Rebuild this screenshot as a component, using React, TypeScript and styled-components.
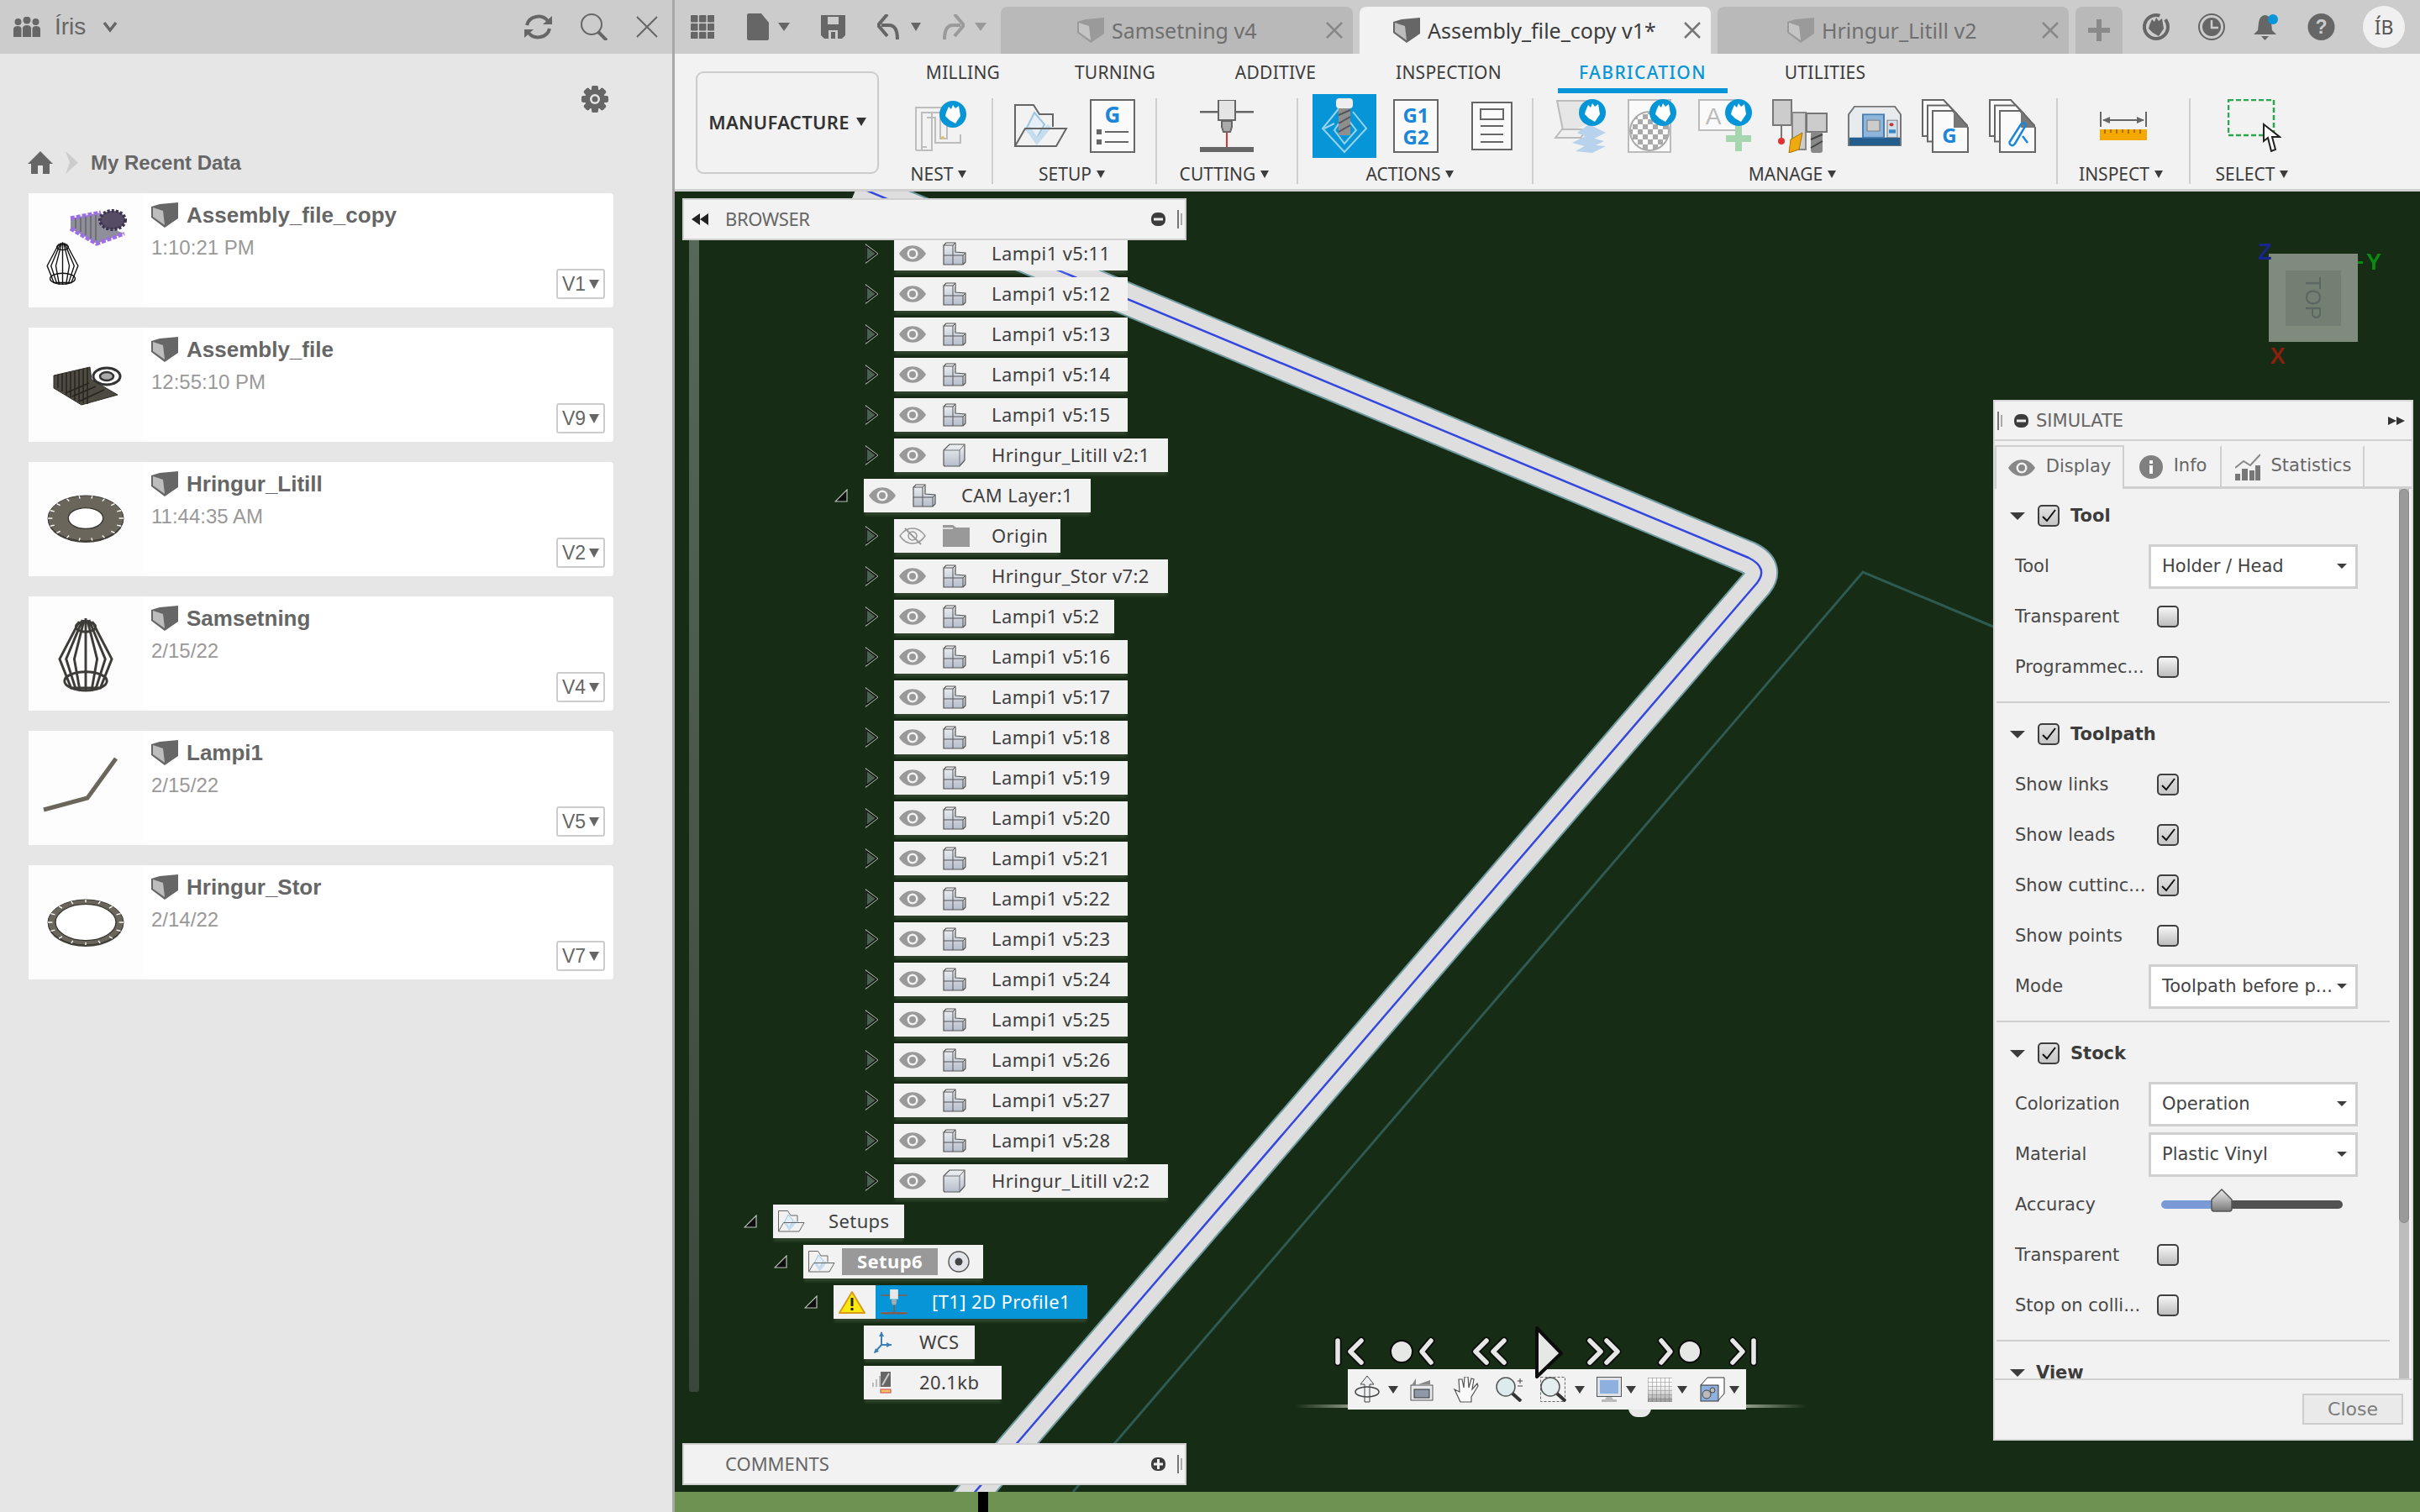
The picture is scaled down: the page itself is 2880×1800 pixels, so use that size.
import React from 'react';
import styled, { createGlobalStyle } from 'styled-components';

const UI_FONT = '"Noto Sans", "Open Sans", sans-serif';
const ARIAL = '"Liberation Sans", Arial, sans-serif';
const DIALOG_FONT = '"DejaVu Sans", sans-serif';
const BLUE = '#0696d7';

const GlobalStyle = createGlobalStyle`
  html, body { margin: 0; padding: 0; background: #e6e6e6; }
  * { box-sizing: border-box; }
  svg { display: block; flex: none; }
`;

const Screen = styled.div`
  display: flex;
  width: 2880px;
  height: 1800px;
  overflow: hidden;
  font-family: ${UI_FONT};
`;

/* ---------- data panel ---------- */

const DataPanel = styled.aside`
  width: 803px;
  flex: none;
  display: flex;
  flex-direction: column;
  background: #e6e6e6;
  border-right: 3px solid #a8a8a8;
  font-family: ${ARIAL};
`;

const DataHeader = styled.header`
  height: 64px;
  flex: none;
  display: flex;
  align-items: center;
  padding: 0 17px 0 16px;
  background: #cccccc;
  color: #666;
`;

const HubName = styled.span`
  margin-left: 17px;
  font-size: 28px;
  line-height: 32px;
  width: 57px;
`;

const HeaderActions = styled.div`
  margin-left: auto;
  display: flex;
  align-items: center;
  gap: 34px;
`;

const SettingsRow = styled.div`
  height: 116px;
  flex: none;
  display: flex;
  align-items: center;
  padding: 0 0 8px 692px;
`;

const Breadcrumb = styled.div`
  height: 50px;
  flex: none;
  display: flex;
  align-items: flex-start;
  gap: 13px;
  padding-left: 33px;
  color: #666;
  font-size: 24px;
  font-weight: 700;
  line-height: 28px;
`;

const CardList = styled.div`
  display: flex;
  flex-direction: column;
  gap: 24px;
  margin-left: 34px;
  width: 696px;
`;

const Card = styled.article`
  position: relative;
  height: 136px;
  display: flex;
  background: #fff;
  border-radius: 4px;
`;

const Thumb = styled.div`
  width: 136px;
  flex: none;
  background: #fdfdfd;
`;

const CardBody = styled.div`
  flex: 1;
  padding: 10px 0 0 10px;
`;

const CardTitle = styled.div`
  display: flex;
  align-items: center;
  gap: 10px;
  height: 32px;
  color: #666;
  font-size: 26px;
  font-weight: 700;
`;

const CardTime = styled.div`
  margin-top: 8px;
  color: #999;
  font-size: 24px;
  line-height: 30px;
`;

const VersionBox = styled.div`
  position: absolute;
  right: 10px;
  bottom: 10px;
  width: 58px;
  height: 36px;
  display: flex;
  align-items: center;
  justify-content: center;
  gap: 4px;
  background: #fff;
  border: 2px solid #ccc;
  border-radius: 3px;
  color: #666;
  font-size: 23px;
`;

const Triangle = styled.i<{ $w?: number; $h?: number; $c?: string }>`
  display: block;
  flex: none;
  width: 0;
  height: 0;
  border-left: ${p => p.$w ?? 6}px solid transparent;
  border-right: ${p => p.$w ?? 6}px solid transparent;
  border-top: ${p => p.$h ?? 10}px solid ${p => p.$c ?? '#666'};
`;

/* ---------- window chrome ---------- */

const Main = styled.main`
  flex: 1;
  min-width: 0;
  display: flex;
  flex-direction: column;
`;

const TabBar = styled.div`
  height: 64px;
  flex: none;
  display: flex;
  align-items: flex-end;
  background: #cccccc;
`;

const QuickTools = styled.div`
  width: 388px;
  height: 64px;
  flex: none;
  display: flex;
  align-items: center;
  padding-left: 19px;
`;

const QuickSlot = styled.span<{ $ml: number }>`
  margin-left: ${p => p.$ml}px;
  display: flex;
  align-items: center;
`;

const DocTab = styled.div<{ $w: number; $pl: number; $active?: boolean }>`
  width: ${p => p.$w}px;
  height: 56px;
  flex: none;
  margin-right: 8px;
  display: flex;
  align-items: center;
  gap: 9px;
  padding: 0 12px 0 ${p => p.$pl}px;
  border-radius: 8px 8px 0 0;
  background: ${p => (p.$active ? '#f2f2f2' : '#b9b9b9')};
  color: ${p => (p.$active ? '#3c3c3c' : '#6f6f6f')};
  font-size: 25px;
`;

const TabClose = styled.span`
  margin-left: auto;
  display: flex;
`;

const PlusTab = styled.div`
  width: 56px;
  height: 56px;
  flex: none;
  display: flex;
  align-items: center;
  justify-content: center;
  border-radius: 8px 8px 0 0;
  background: #b9b9b9;
`;

const StatusIcons = styled.div`
  height: 64px;
  flex: 1;
  display: flex;
  align-items: center;
  gap: 34px;
  padding-left: 24px;
`;

const Avatar = styled.div`
  width: 50px;
  height: 50px;
  flex: none;
  margin-left: -1px;
  display: flex;
  align-items: center;
  justify-content: center;
  border-radius: 50%;
  background: #f0f0f0;
  color: #555;
  font-size: 23px;
`;

/* ---------- ribbon ---------- */

const Ribbon = styled.div`
  height: 164px;
  flex: none;
  display: flex;
  background: #f2f2f2;
  border-bottom: 3px solid #d0d0d0;
`;

const WorkspaceButton = styled.div`
  width: 218px;
  height: 122px;
  flex: none;
  margin: 21px 0 0 25px;
  display: flex;
  align-items: center;
  justify-content: center;
  gap: 8px;
  padding-bottom: 3px;
  border: 2px solid #ccc;
  border-radius: 9px;
  color: #333;
  font-size: 22px;
  font-weight: 600;
  letter-spacing: 0.3px;
`;

const RibbonBody = styled.div`
  display: flex;
  flex-direction: column;
  margin-left: 14px;
`;

const RibbonTabs = styled.nav`
  height: 47px;
  display: flex;
  gap: 44px;
  padding-left: 20px;
`;

const RibbonTab = styled.div<{ $w: number; $active?: boolean }>`
  width: ${p => p.$w}px;
  height: 47px;
  flex: none;
  text-align: center;
  line-height: 44px;
  font-size: 21px;
  letter-spacing: ${p => (p.$active ? 1.4 : 0.25)}px;
  color: ${p => (p.$active ? BLUE : '#3c3c3c')};
  font-weight: ${p => (p.$active ? 500 : 400)};
  border-bottom: 6px solid ${p => (p.$active ? BLUE : 'transparent')};
`;

const RibbonGroups = styled.div`
  display: flex;
  padding-top: 6px;
  height: 114px;
`;

const ToolGroup = styled.section<{ $w: number; $last?: boolean; $shift?: number }>`
  width: ${p => p.$w}px;
  flex: none;
  display: flex;
  flex-direction: column;
  align-items: center;
  height: 102px;
  padding-right: ${p => p.$shift ?? 0}px;
  border-right: 2px solid ${p => (p.$last ? 'transparent' : '#cfcfcf')};
`;

const ToolIcons = styled.div<{ $gap: number }>`
  height: 76px;
  flex: none;
  margin-top: -5px;
  display: flex;
  align-items: center;
  gap: ${p => p.$gap}px;
`;

const GroupLabel = styled.div`
  flex: none;
  display: flex;
  align-items: center;
  gap: 6px;
  margin-top: 4px;
  padding-right: 6px;
  height: 30px;
  font-size: 21px;
  color: #3c3c3c;
`;

const ActiveTool = styled.div`
  width: 76px;
  height: 76px;
  display: flex;
  align-items: center;
  justify-content: center;
  background: ${BLUE};
`;

/* ---------- viewport ---------- */

const Viewport = styled.div`
  position: relative;
  flex: 1;
  background: #162c14;
  overflow: hidden;
`;

const Ground = styled.div`
  height: 24px;
  flex: none;
  padding-left: 361px;
  background: #6d9252;
`;

const GroundMark = styled.div`
  width: 12px;
  height: 24px;
  background: #000;
`;

const SceneSvg = styled.svg`
  position: absolute;
  inset: 0;
`;

const ViewCube = styled.div`
  position: absolute;
  left: 1897px;
  top: 74px;
  width: 106px;
  height: 105px;
  display: flex;
  align-items: center;
  justify-content: center;
  background: #7f8c7d;
`;

const CubeFace = styled.div`
  width: 66px;
  height: 66px;
  display: flex;
  align-items: center;
  justify-content: center;
  background: #727f72;
  color: #5b6862;
  font: 25px ${ARIAL};
  transform: rotate(90deg);
  filter: blur(0.5px);
`;

const AxisLabel = styled.span<{ $x: number; $y: number; $c: string }>`
  position: absolute;
  left: ${p => p.$x}px;
  top: ${p => p.$y}px;
  color: ${p => p.$c};
  font: 700 27px/28px ${ARIAL};
  filter: blur(0.7px);
`;

const AxisTick = styled.div`
  position: absolute;
  left: 2003px;
  top: 83px;
  width: 6px;
  height: 3px;
  background: #0a8a10;
`;

const FloatBar = styled.div<{ $top: number }>`
  position: absolute;
  left: 9px;
  top: ${p => p.$top}px;
  width: 600px;
  height: 50px;
  display: flex;
  align-items: center;
  padding-right: 3px;
  background: #f2f2f2;
  border: 2px solid #d0d0d0;
  color: #666;
  font-size: 22px;
`;

const FloatTitle = styled.span<{ $ml: number; $tight?: boolean }>`
  margin-left: ${p => p.$ml}px;
  margin-bottom: 3px;
  letter-spacing: ${p => (p.$tight ? -0.4 : 0)}px;
`;

const RewindSlot = styled.span`
  margin-left: 9px;
`;

const FloatEnd = styled.div`
  margin-left: auto;
  display: flex;
  align-items: center;
  gap: 14px;
`;

const TreeScroll = styled.div`
  position: absolute;
  left: 17px;
  top: 54px;
  width: 12px;
  height: 1375px;
  border-radius: 0 0 3px 3px;
  background: linear-gradient(#566858, #3a4639);
`;

const Tree = styled.div`
  position: absolute;
  left: 9px;
  top: 54px;
  display: flex;
  flex-direction: column;
  gap: 8px;
`;

const TreeRow = styled.div<{ $depth: number }>`
  display: flex;
  align-items: center;
  height: 40px;
  padding-left: ${p => 72 + p.$depth * 36}px;
`;

const ArrowSlot = styled.span`
  width: 36px;
  flex: none;
  display: flex;
  padding-left: 1px;
`;

const RowBody = styled.div<{ $w: number }>`
  width: ${p => p.$w}px;
  height: 40px;
  display: flex;
  align-items: center;
  padding-left: 6px;
  background: #f2f2f2;
  color: #3f3f3f;
  font-size: 22px;
  letter-spacing: 0.4px;
  white-space: nowrap;
  box-shadow: 0 5px 3px -1px rgba(255, 255, 255, 0.11);
`;

const RowLabel = styled.span`
  margin-bottom: 3px;
`;

const EyeSlot = styled.span`
  width: 52px;
  flex: none;
`;

const TypeSlot = styled.span`
  width: 58px;
  flex: none;
`;

const SmallSlot = styled.span<{ $pl?: number }>`
  width: 60px;
  flex: none;
  display: flex;
  padding-left: ${p => p.$pl ?? 0}px;
`;

const SetupName = styled.span`
  width: 114px;
  height: 32px;
  margin-left: 8px;
  display: flex;
  align-items: center;
  justify-content: center;
  padding-bottom: 2px;
  background: #999;
  color: #fff;
  font-weight: 700;
`;

const RadioSlot = styled.span`
  margin-left: 12px;
`;

const OperationRow = styled(RowBody)`
  padding-left: 0;
`;

const WarnCell = styled.span`
  width: 50px;
  flex: none;
  padding-left: 6px;
`;

const OperationName = styled.span`
  height: 40px;
  flex: 1;
  display: flex;
  align-items: center;
  gap: 29px;
  padding-left: 6px;
  background: ${BLUE};
  color: #fff;
`;

const PlaybackBar = styled.svg`
  position: absolute;
  left: 785px;
  top: 1345px;
  z-index: 2;
`;

const SliderGlow = styled.div`
  position: absolute;
  left: 737px;
  top: 1444px;
  width: 610px;
  height: 4px;
  background: linear-gradient(90deg, transparent, #a9b29f 14%, #a9b29f 86%, transparent);
`;

const SliderBump = styled.div`
  position: absolute;
  left: 1135px;
  top: 1448px;
  width: 27px;
  height: 11px;
  border-radius: 0 0 14px 14px;
  background: #e8e8e8;
`;

const NavBar = styled.div`
  position: absolute;
  left: 801px;
  top: 1402px;
  width: 474px;
  height: 48px;
  display: flex;
  align-items: center;
  padding-left: 8px;
  background: #f2f2f2;
`;

const NavItem = styled.span<{ $ml: number }>`
  margin-left: ${p => p.$ml}px;
  display: flex;
`;

/* ---------- simulate dialog ---------- */

const SimPanel = styled.div`
  position: absolute;
  left: 1569px;
  top: 248px;
  width: 500px;
  height: 1239px;
  display: flex;
  flex-direction: column;
  background: #f2f2f2;
  border: 2px solid #d8d8d8;
  font-family: ${DIALOG_FONT};
  font-size: 21px;
  color: #484848;
`;

const SimHeader = styled.div`
  height: 47px;
  flex: none;
  display: flex;
  align-items: center;
  gap: 6px;
  padding: 0 8px 0 3px;
  color: #666;
  border-bottom: 2px solid #d0d0d0;
`;

const SimBadge = styled.span`
  margin-left: 8px;
`;

const SimTitle = styled.span`
  margin-left: 3px;
  flex: 1;
`;

const SimTabs = styled.div`
  height: 57px;
  flex: none;
  display: flex;
  padding: 5px 0 0 0;
  border-bottom: 3px solid #cfcfcf;
`;

const SimTab = styled.div<{ $w: number; $active?: boolean }>`
  width: ${p => p.$w}px;
  flex: none;
  display: flex;
  align-items: center;
  justify-content: center;
  gap: 13px;
  color: #666;
  border-right: 2px solid #cfcfcf;
  border-top: 2px solid ${p => (p.$active ? '#cfcfcf' : 'transparent')};
  border-left: 2px solid ${p => (p.$active ? '#cfcfcf' : 'transparent')};
  ${p => p.$active && 'margin-bottom: -3px; background: #f2f2f2;'}
`;

const SimTabText = styled.span`
  margin-bottom: 4px;
`;

const SimContent = styled.div`
  position: relative;
  flex: 1;
  min-height: 0;
  overflow: hidden;
  padding: 2px 0 0 2px;
`;

const ScrollTrack = styled.div`
  position: absolute;
  right: 3px;
  top: 0;
  bottom: 0;
  width: 12px;
  background: #bdbdbd;
`;

const ScrollThumb = styled.div`
  height: 874px;
  border-radius: 6px;
  background: #9a9a9a;
  border: 1px solid #8a8a8a;
`;

const Section = styled.section<{ $open?: boolean }>`
  width: 468px;
  padding-bottom: 11px;
  margin-bottom: 7px;
  border-bottom: 2px solid ${p => (p.$open ? '#cfcfcf' : 'transparent')};
`;

const SectionHead = styled.div`
  height: 60px;
  display: flex;
  align-items: center;
  padding-left: 16px;
  color: #3c3c3c;
  font-weight: 700;
`;

const HeadTitle = styled.span`
  margin-left: 13px;
`;

const Check = styled.span<{ $on?: boolean; $ml: number }>`
  width: 26px;
  height: 26px;
  flex: none;
  margin-left: ${p => p.$ml}px;
  display: flex;
  align-items: center;
  justify-content: center;
  border: 2px solid #3f3f3f;
  border-radius: 5px;
  background: ${p => (p.$on ? 'linear-gradient(#e2e2e2, #c6c6c6)' : 'linear-gradient(#f6f6f6, #bdbdbd)')};
`;

const FieldRow = styled.div`
  height: 60px;
  display: flex;
  align-items: center;
  padding-left: 22px;
`;

const FieldLabel = styled.span`
  width: 159px;
  flex: none;
  white-space: nowrap;
`;

const SelectBox = styled.div`
  width: 249px;
  height: 53px;
  flex: none;
  display: flex;
  align-items: center;
  justify-content: space-between;
  padding: 0 10px 0 13px;
  background: #fff;
  border: 3px solid #cfcfcf;
  color: #444;
  white-space: nowrap;
`;

const Slider = styled.div`
  position: relative;
  width: 216px;
  height: 10px;
  margin-left: 15px;
  border-radius: 5px;
  background: linear-gradient(90deg, #7a9ad6 28%, #525252 28%);
`;

const SliderThumb = styled.svg`
  position: absolute;
  left: 59px;
  top: -14px;
`;

const SimFooter = styled.div`
  height: 72px;
  flex: none;
  display: flex;
  align-items: center;
  justify-content: flex-end;
  padding: 0 10px 2px 0;
  border-top: 2px solid #cfcfcf;
`;

const CloseButton = styled.div`
  width: 120px;
  height: 37px;
  display: flex;
  align-items: center;
  justify-content: center;
  background: #eaeaea;
  border: 2px solid #cdcdcd;
  color: #7c7c7c;
  font-size: 22px;
`;

/* ---------- icons ---------- */

const BoxIcon = ({ w = 32, h = 32, dim }: { w?: number; h?: number; dim?: boolean }) => (
  <svg width={w} height={h} viewBox="0 0 32 32">
    <path d="M0 6 L10 3 L32 1 L32 20 L16 31 L0 19Z" fill={dim ? '#9a9a9a' : '#666'} />
    <path d="M2 7 L14 11 L16 28 L2 18Z" fill={dim ? '#c4c4c4' : '#bdbdbd'} />
  </svg>
);

const BadgeIcon = ({ x, y, c = BLUE }: { x: number; y: number; c?: string }) => (
  <g transform={`translate(${x} ${y})`}>
    <circle cx="16" cy="16" r="16" fill={c} />
    <path d="M8 14 L11 7 L14 10 L16 5 L19 9 L23 6 L25 18 L19 27 L12 23 L7 18Z" fill="#fff" />
  </g>
);

const NestIcon = () => (
  <svg width="62" height="60" viewBox="0 0 62 60">
    <g fill="none" stroke="#bdbdbd" strokeWidth="2">
      <path d="M1 59 V8 H40 M1 59 H20 V14 M8 59 V14 H30 V45 H38 V20 M14 20 H24 V50 H54 V40 M8 55 H14" />
    </g>
    <BadgeIcon x={29} y={0} />
    <circle cx="33" cy="44" r="2" fill="#e6c267" />
  </svg>
);

const FolderIcon = ({ w = 64, h = 52 }: { w?: number; h?: number }) => (
  <svg width={w} height={h} viewBox="0 0 64 52">
    <path d="M1 50 V1 H23 L30 12 H46 V27" fill="none" stroke="#666" strokeWidth="2" />
    <path d="M14 30 L24 10 L36 24 L26 42Z" fill="#e6eff7" stroke="#9cc3e2" strokeWidth="2" />
    <path d="M16 28 L27 44 L42 26" fill="none" stroke="#c3dcee" strokeWidth="6" />
    <path d="M1 50 L13 29 H62 L50 50Z" fill="none" stroke="#666" strokeWidth="2" />
  </svg>
);

const GDocIcon = () => (
  <svg width="54" height="64" viewBox="0 0 54 64">
    <rect x="1" y="1" width="52" height="62" fill="#fafafa" stroke="#666" strokeWidth="2" />
    <text x="27" y="28" textAnchor="middle" fontFamily={UI_FONT} fontWeight="700" fontSize="26" fill="#1c86d8">G</text>
    <rect x="8" y="36" width="6" height="6" fill="#666" /><rect x="18" y="38" width="28" height="2" fill="#666" />
    <rect x="8" y="48" width="6" height="6" fill="#666" /><rect x="18" y="50" width="28" height="2" fill="#666" />
  </svg>
);

const CuttingIcon = ({ red = '#d33' }: { red?: string }) => (
  <svg width="64" height="62" viewBox="0 0 64 62">
    <rect x="0" y="13" width="64" height="2.5" fill="#666" />
    <rect x="22" y="0" width="20" height="24" fill="#e4e4e4" stroke="#666" strokeWidth="2" />
    <path d="M26 25 H38 V32 L36 38 H28 L26 32Z" fill="#aaa" stroke="#666" strokeWidth="2" />
    <rect x="31" y="38" width="2" height="18" fill={red} />
    <rect x="0" y="56" width="64" height="6" fill="#666" />
  </svg>
);

const EndmillActive = () => (
  <svg width="60" height="66" viewBox="0 0 60 66">
    <g fill="none" stroke="#9bd2ef" strokeWidth="2">
      <path d="M30 4 L4 36 L30 64 L56 36 L40 16" />
      <path d="M18 30 L6 36 M30 54 L18 38 L30 20 L44 38Z" />
    </g>
    <rect x="20" y="0" width="20" height="12" rx="4" fill="#eee" />
    <rect x="23" y="12" width="14" height="32" fill="#8e8e8e" />
    <path d="M23 20 L37 14 M23 30 L37 22 M23 40 L37 32" stroke="#555" strokeWidth="2" />
  </svg>
);

const G1G2Icon = () => (
  <svg width="54" height="64" viewBox="0 0 54 64">
    <rect x="1" y="1" width="52" height="62" fill="#fafafa" stroke="#666" strokeWidth="2" />
    <g fontFamily={UI_FONT} fontWeight="700" fontSize="24" fill="#1c86d8" textAnchor="middle">
      <text x="27" y="28">G1</text>
      <text x="27" y="54">G2</text>
    </g>
  </svg>
);

const SheetIcon = () => (
  <svg width="68" height="58" viewBox="0 0 68 58">
    <rect x="20" y="1" width="47" height="56" fill="#fafafa" stroke="#666" strokeWidth="2" />
    <rect x="30" y="9" width="27" height="12" fill="none" stroke="#666" strokeWidth="2" />
    <path d="M30 29 H57 M30 39 H57 M30 48 H57" stroke="#666" strokeWidth="2" />
  </svg>
);

const TapeIcon = () => (
  <svg width="64" height="64" viewBox="0 0 64 64">
    <path d="M12 42 L4 2 H40 V30" fill="#e6e6e6" stroke="#bbb" strokeWidth="2" />
    <path d="M2 46 L10 36 H40 L32 46Z" fill="#efefef" stroke="#bbb" strokeWidth="2" />
    <g fill="#b6d2ec"><path d="M28 40 L42 30 L62 40 L46 48Z" /><path d="M22 52 L38 44 L60 50 L44 58Z" /><path d="M26 62 L40 54 L62 56 L46 64Z" /></g>
    <BadgeIcon x={30} y={0} />
  </svg>
);

const CheckerIcon = () => (
  <svg width="60" height="64" viewBox="0 0 60 64">
    <rect x="1" y="1" width="50" height="62" fill="#fafafa" stroke="#bbb" strokeWidth="2" />
    <defs>
      <pattern id="chk" width="12" height="12" patternUnits="userSpaceOnUse">
        <rect width="12" height="12" fill="#fff" /><rect width="6" height="6" fill="#aaa" /><rect x="6" y="6" width="6" height="6" fill="#aaa" />
      </pattern>
    </defs>
    <circle cx="26" cy="38" r="23" fill="url(#chk)" stroke="#aaa" strokeWidth="2" />
    <BadgeIcon x={26} y={0} />
  </svg>
);

const TextPlusIcon = () => (
  <svg width="64" height="64" viewBox="0 0 64 64">
    <rect x="1" y="1" width="46" height="36" fill="#fafafa" stroke="#bbb" strokeWidth="2" />
    <text x="18" y="30" textAnchor="middle" fontFamily={ARIAL} fontSize="28" fill="#bbb">A</text>
    <path d="M48 32 V62 M33 47 H63" stroke="#a5d6b0" strokeWidth="8" />
    <BadgeIcon x={32} y={0} />
  </svg>
);

const ToolsIcon = () => (
  <svg width="66" height="64" viewBox="0 0 66 64">
    <rect x="1" y="1" width="22" height="30" fill="#ccc" stroke="#777" strokeWidth="2" />
    <rect x="24" y="16" width="16" height="44" fill="#ccc" stroke="#888" strokeWidth="2" />
    <path d="M11 31 V46" stroke="#777" strokeWidth="2" /><circle cx="11" cy="50" r="4" fill="#d33" />
    <path d="M22 48 L36 40 L32 60 L20 64Z" fill="#f0a90e" stroke="#a87508" />
    <rect x="41" y="17" width="24" height="22" fill="#ccc" stroke="#777" strokeWidth="2" />
    <rect x="46" y="39" width="14" height="25" rx="3" fill="#888" />
    <path d="M46 48 L60 42 M46 58 L60 50" stroke="#444" strokeWidth="2" />
  </svg>
);

const MachineIcon = () => (
  <svg width="64" height="48" viewBox="0 0 64 56" preserveAspectRatio="none">
    <path d="M1 12 L8 1 H56 L63 12 V55 H1Z" fill="#e8ebee" stroke="#777" strokeWidth="2" />
    <rect x="2" y="44" width="60" height="11" fill="#235d8e" />
    <rect x="18" y="12" width="25" height="32" fill="#8eb6dc" stroke="#4a7eb0" strokeWidth="2" />
    <rect x="23" y="20" width="15" height="15" fill="#ccc" stroke="#777" />
    <rect x="47" y="20" width="12" height="24" fill="#cfe0ee" stroke="#777" />
    <circle cx="52" cy="26" r="2.5" fill="#c33" /><rect x="49" y="33" width="8" height="5" fill="#3a87c8" />
  </svg>
);

const FilesIcon = ({ kind }: { kind: 'G' | 'S' }) => (
  <svg width="56" height="64" viewBox="0 0 56 64">
    {[0, 6, 12].map(o => (
      <path key={o} d={`M${o + 1} ${o * 1.1 + 1} H${o + 26} L${o + 42} ${o * 1.1 + 18} V${o * 1.1 + 44} H${o + 1}Z`} fill="#fafafa" stroke="#666" strokeWidth="2" />
    ))}
    <path d="M13 14 H37 L55 34 V63 H13Z" fill="#fafafa" stroke="#666" strokeWidth="2" />
    <path d="M38 14 L55 34 H38Z" fill="#777" />
    {kind === 'G'
      ? <text x="33" y="52" textAnchor="middle" fontFamily={UI_FONT} fontWeight="700" fontSize="24" fill="#1c86d8">G</text>
      : <path d="M24 52 L38 30 Q42 26 44 31 L31 53 Q27 58 24 52 M46 52 L40 44" fill="none" stroke="#1c86d8" strokeWidth="2.5" />}
  </svg>
);

const RulerIcon = () => (
  <svg width="56" height="34" viewBox="0 0 56 34">
    <path d="M1 0 V18 M55 0 V18 M4 10 H52" stroke="#666" strokeWidth="2" />
    <path d="M3 10 L12 6 V14Z M53 10 L44 6 V14Z" fill="#666" />
    <rect x="0" y="21" width="56" height="13" fill="#f5a800" />
    <path d="M6 21 V26 M13 21 V25 M20 21 V26 M27 21 V25 M34 21 V26 M41 21 V25 M48 21 V26" stroke="#8a6000" strokeWidth="1.5" />
  </svg>
);

const SelectBoxIcon = () => (
  <svg width="64" height="64" viewBox="0 0 64 64">
    <rect x="1" y="1" width="54" height="42" fill="none" stroke="#2aa850" strokeWidth="2.5" strokeDasharray="6 3" />
    <path d="M43 30 L43 50 L48 46 L52 62 L57 60 L53 45 L62 45Z" fill="#fff" stroke="#222" strokeWidth="2" />
  </svg>
);

const Eye = ({ off, fill = '#999', bg = '#f2f2f2' }: { off?: boolean; fill?: string; bg?: string }) =>
  off ? (
    <svg width="32" height="22" viewBox="0 0 32 22">
      <path d="M1 11 C9 -1 23 -1 31 11 C23 23 9 23 1 11Z" fill="none" stroke="#999" strokeWidth="1.5" />
      <circle cx="16" cy="11" r="5" fill="none" stroke="#999" strokeWidth="1.5" />
      <path d="M7 2 L26 21" stroke="#999" strokeWidth="2" />
    </svg>
  ) : (
    <svg width="32" height="20" viewBox="0 0 32 20">
      <path d="M0 10 C8 -3 24 -3 32 10 C24 23 8 23 0 10Z" fill={fill} />
      <circle cx="16" cy="10" r="6.5" fill={bg} /><circle cx="16" cy="10" r="4" fill={fill} />
    </svg>
  );

const AssemblyGlyph = () => (
  <svg width="28" height="29" viewBox="0 0 28 29">
    <defs>
      <linearGradient id="asm" x1="0" y1="0" x2="0" y2="1"><stop offset="0" stopColor="#eef0f3" /><stop offset="1" stopColor="#b6bdcb" /></linearGradient>
    </defs>
    <path d="M1 27 V4 L4 1 H15 V12 L27 13 V24 L24 27Z" fill="url(#asm)" stroke="#555" strokeWidth="1.2" />
    <path d="M1 4 H12 L15 1 M12 4 V27 M12 16 H24 L27 13 M24 16 V27 M1 16 H12" fill="none" stroke="#555" strokeWidth="1" />
  </svg>
);

const BodyGlyph = () => (
  <svg width="28" height="28" viewBox="0 0 28 28">
    <path d="M1 8 L8 1 H26 V20 L20 27 H3 Q1 27 1 25Z" fill="url(#asm)" stroke="#555" strokeWidth="1.2" />
    <path d="M1 8 H20 L26 1 M20 8 V27" fill="none" stroke="#777" strokeWidth="1" />
  </svg>
);

const FolderGlyph = () => (
  <svg width="32" height="26" viewBox="0 0 32 26">
    <path d="M0 0 H12 L16 3 H32 V26 H0Z" fill="#999" />
    <rect x="0" y="3" width="12" height="2" fill="#ddd" />
  </svg>
);

const Collapsed = () => (
  <svg width="16" height="24" viewBox="-1 -2 16 24">
    <path d="M1 0 L14 10 L1 20Z" fill="none" stroke="#a7b2a6" strokeWidth="2" />
    <path d="M1 1 L13 10 L1 19Z" fill="#4a6150" stroke="#050a05" strokeWidth="1.5" />
  </svg>
);

const Expanded = () => (
  <svg width="16" height="16" viewBox="0 0 16 16">
    <path d="M1 15 H15 V1Z" fill="#0d0d0d" stroke="#b9c2b8" strokeWidth="1.2" />
  </svg>
);

const WarnGlyph = () => (
  <svg width="32" height="29" viewBox="0 0 32 29">
    <path d="M16 2 L31 27 H1Z" fill="#fbe80c" stroke="#d89a1a" strokeWidth="2" strokeLinejoin="round" />
    <rect x="14.5" y="9" width="3" height="10" fill="#222" /><rect x="14.5" y="21" width="3" height="3" fill="#222" />
  </svg>
);

const RadioGlyph = () => (
  <svg width="26" height="26" viewBox="0 0 26 26">
    <circle cx="13" cy="13" r="12" fill="#e2e4ea" stroke="#555" strokeWidth="1.4" />
    <circle cx="13" cy="13" r="4.5" fill="#444" />
  </svg>
);

const WcsGlyph = () => (
  <svg width="22" height="26" viewBox="0 0 22 26">
    <path d="M9 1 V16 L1 25 M9 16 H21" fill="none" stroke="#3d7fb8" strokeWidth="2" />
    <path d="M9 0 L6 6 H12Z M21 16 L15 13 V19Z M0 26 L6 24 L2 20Z" fill="#3d7fb8" />
  </svg>
);

const SizeGlyph = () => (
  <svg width="24" height="26" viewBox="0 0 24 26">
    <rect x="10" y="0" width="12" height="18" fill="#666" />
    <path d="M12 16 L20 2" stroke="#ccc" strokeWidth="2" />
    <path d="M1 18 V13 M5 18 V9 M9 18 V5" stroke="#aaa" strokeWidth="1.5" />
    <rect x="10" y="21" width="12" height="4" fill="#f5c26b" stroke="#c44" />
  </svg>
);

const MinusBadge = ({ plus }: { plus?: boolean }) => (
  <svg width="17" height="16" viewBox="0 0 17 16">
    <rect width="17" height="16" rx="7" fill="#3c3c3c" />
    <rect x="3" y="6.5" width="11" height="3" fill="#eee" />
    {plus && <rect x="7" y="2" width="3" height="12" fill="#eee" />}
  </svg>
);

const Grip = () => (
  <svg width="6" height="22" viewBox="0 0 6 22">
    <rect x="0" y="0" width="2" height="22" fill="#777" /><rect x="4" y="4" width="2" height="14" fill="#aaa" />
  </svg>
);

const CheckMark = () => (
  <svg width="20" height="18" viewBox="0 0 20 18">
    <path d="M3 10 L8 15 L18 2" fill="none" stroke="#111" strokeWidth="2" />
  </svg>
);

/* thumbnails of the recent files */

const CageLamp = ({ x, y, w, h, stroke, weight = 2.4 }: { x: number; y: number; w: number; h: number; stroke: string; weight?: number }) => (
  <g transform={`translate(${x} ${y}) scale(${w / 68} ${h / 90})`} fill="none" stroke={stroke} strokeWidth={weight}>
    <path d="M26 6 L2 50 L16 84 H52 L66 50 L42 6" />
    <path d="M30 4 L10 50 L22 86 M32 4 L20 50 L27 88 M34 2 V88 M36 4 L48 50 L41 88 M38 4 L58 50 L46 86" />
    <ellipse cx="34" cy="12" rx="12" ry="6" />
    <ellipse cx="34" cy="76" rx="26" ry="11" />
  </g>
);

const Gear = ({ cx, cy, rx, ry, hole, teeth }: { cx: number; cy: number; rx: number; ry: number; hole: number; teeth: number }) => (
  <g>
    <ellipse cx={cx} cy={cy + 2} rx={rx} ry={ry} fill="#45423a" />
    <ellipse cx={cx} cy={cy} rx={rx} ry={ry} fill="#6a665b" stroke="#3a3833" strokeWidth="1" />
    {Array.from({ length: teeth }, (_, i) => {
      const a = (i / teeth) * Math.PI * 2;
      return (
        <line key={i} x1={cx + Math.cos(a) * rx} y1={cy + Math.sin(a) * ry} x2={cx + Math.cos(a) * rx * 0.88} y2={cy + Math.sin(a) * ry * 0.88} stroke="#fff" strokeWidth="1.4" />
      );
    })}
    <ellipse cx={cx} cy={cy} rx={rx * hole} ry={ry * hole} fill="#fff" stroke="#3a3833" strokeWidth="1.4" />
  </g>
);

const Thumbnail = ({ kind }: { kind: string }) => (
  <svg width="136" height="136" viewBox="0 0 136 136">
    {kind === 'copy' && (
      <g>
        <path d="M50 30 L86 23 L86 37 L114 48 L81 60 L50 42Z" fill="#8f8f9c" />
        <path d="M50 30 L86 23 M50 42 L81 60 L114 48" fill="none" stroke="#9c6fe6" strokeWidth="5" strokeDasharray="5 2" />
        <path d="M56 30 V42 M62 29 V46 M68 28 V50 M74 27 V54 M80 26 V56" stroke="#666" strokeWidth="1.5" />
        <ellipse cx="100" cy="32" rx="15" ry="11" fill="#574c66" stroke="#3d3350" strokeDasharray="3 2" strokeWidth="4" />
        <CageLamp x={21} y={57} w={39} h={53} stroke="#111" />
      </g>
    )}
    {kind === 'asm' && (
      <g>
        <path d="M30 57 L73 47 L75 62 L106 80 L63 92 L30 72Z" fill="#4d4a42" stroke="#2a2823" />
        <path d="M35 56 V72 M40 55 V76 M45 54 V80 M50 53 V83 M55 52 V86 M60 50 V88 M65 49 V90 M70 48 V91 M72 66 L44 78 M80 70 L52 82 M90 74 L60 88" stroke="#27251f" strokeWidth="1.5" />
        <ellipse cx="93" cy="58" rx="16" ry="10" fill="#fff" stroke="#333" strokeWidth="3" />
        <ellipse cx="93" cy="58" rx="8" ry="5" fill="#aaa" stroke="#333" strokeWidth="2.5" />
      </g>
    )}
    {kind === 'litill' && <Gear cx={68} cy={67} rx={45} ry={27} hole={0.46} teeth={18} />}
    {kind === 'lamp' && <CageLamp x={35} y={24} w={66} h={91} stroke="#3d3c38" weight={3} />}
    {kind === 'lampi' && (
      <path d="M18 94 L70 80 L104 33" fill="none" stroke="#6a665b" strokeWidth="5" strokeLinejoin="miter" />
    )}
    {kind === 'stor' && <Gear cx={68} cy={68} rx={45} ry={27} hole={0.8} teeth={16} />}
  </svg>
);

/* ---------- content ---------- */

const recentFiles = [
  { name: 'Assembly_file_copy', time: '1:10:21 PM', version: 'V1', thumb: 'copy' },
  { name: 'Assembly_file', time: '12:55:10 PM', version: 'V9', thumb: 'asm' },
  { name: 'Hringur_Litill', time: '11:44:35 AM', version: 'V2', thumb: 'litill' },
  { name: 'Samsetning', time: '2/15/22', version: 'V4', thumb: 'lamp' },
  { name: 'Lampi1', time: '2/15/22', version: 'V5', thumb: 'lampi' },
  { name: 'Hringur_Stor', time: '2/14/22', version: 'V7', thumb: 'stor' },
];

const lampRows = (from: number, to: number) =>
  Array.from({ length: to - from + 1 }, (_, i) => `Lampi1 v5:${from + i}`);

const GraySvg = ({ w, h, children, vb }: { w: number; h: number; vb?: string; children: React.ReactNode }) => (
  <svg width={w} height={h} viewBox={vb ?? `0 0 ${w} ${h}`} fill="#666">{children}</svg>
);

const ComponentRow = ({ label, w, depth = 4, body, off, folder, open }: {
  label: string; w: number; depth?: number; body?: boolean; off?: boolean; folder?: boolean; open?: boolean;
}) => (
  <TreeRow $depth={depth}>
    <ArrowSlot>{open ? <Expanded /> : <Collapsed />}</ArrowSlot>
    <RowBody $w={w}>
      <EyeSlot><Eye off={off} /></EyeSlot>
      <TypeSlot>{folder ? <FolderGlyph /> : body ? <BodyGlyph /> : <AssemblyGlyph />}</TypeSlot>
      <RowLabel>{label}</RowLabel>
    </RowBody>
  </TreeRow>
);

const BrowserTree = () => (
  <Tree>
    {lampRows(11, 15).map(l => <ComponentRow key={l} label={l} w={278} />)}
    <ComponentRow label="Hringur_Litill v2:1" w={326} body />
    <ComponentRow label="CAM Layer:1" w={270} depth={3} open />
    <ComponentRow label="Origin" w={198} off folder />
    <ComponentRow label="Hringur_Stor v7:2" w={326} />
    <ComponentRow label="Lampi1 v5:2" w={262} />
    {lampRows(16, 28).map(l => <ComponentRow key={l} label={l} w={278} />)}
    <ComponentRow label="Hringur_Litill v2:2" w={326} body />
    <TreeRow $depth={0}>
      <ArrowSlot><Expanded /></ArrowSlot>
      <RowBody $w={156}>
        <SmallSlot><FolderIcon w={32} h={26} /></SmallSlot>
        <RowLabel>Setups</RowLabel>
      </RowBody>
    </TreeRow>
    <TreeRow $depth={1}>
      <ArrowSlot><Expanded /></ArrowSlot>
      <RowBody $w={214}>
        <FolderIcon w={32} h={26} />
        <SetupName>Setup6</SetupName>
        <RadioSlot><RadioGlyph /></RadioSlot>
      </RowBody>
    </TreeRow>
    <TreeRow $depth={2}>
      <ArrowSlot><Expanded /></ArrowSlot>
      <OperationRow $w={302}>
        <WarnCell><WarnGlyph /></WarnCell>
        <OperationName>
          <svg width="32" height="30" viewBox="0 0 64 62">
            <rect x="0" y="13" width="64" height="3" fill="#8a5a4a" />
            <rect x="22" y="0" width="20" height="24" fill="#e8e8e8" />
            <path d="M26 25 H38 V32 L36 38 H28 L26 32Z" fill="#aaa" />
            <rect x="31" y="38" width="3" height="18" fill="#8a5a4a" />
            <rect x="0" y="56" width="64" height="5" fill="#8a5a4a" />
          </svg>
          <RowLabel>[T1] 2D Profile1</RowLabel>
        </OperationName>
      </OperationRow>
    </TreeRow>
    <TreeRow $depth={3}>
      <ArrowSlot />
      <RowBody $w={132}>
        <SmallSlot $pl={6}><WcsGlyph /></SmallSlot>
        <RowLabel>WCS</RowLabel>
      </RowBody>
    </TreeRow>
    <TreeRow $depth={3}>
      <ArrowSlot />
      <RowBody $w={164}>
        <SmallSlot $pl={4}><SizeGlyph /></SmallSlot>
        <RowLabel>20.1kb</RowLabel>
      </RowBody>
    </TreeRow>
  </Tree>
);

const chevrons: string[] = [
  'M789 23 V49 M817 23 L804 36 L817 49',
  'M900 23 L889 36 L900 49',
  'M966 23 L953 36 L966 49 M987 23 L974 36 L987 49',
  'M1089 23 L1102 36 L1089 49 M1109 23 L1122 36 L1109 49',
  'M1174 23 L1185 36 L1174 49',
  'M1259 23 L1271 36 L1259 49 M1284 23 V49',
];

const Playback = () => (
  <PlaybackBar width="520" height="80" viewBox="785 0 520 80">
    <g fill="none" strokeLinecap="round" strokeLinejoin="round">
      {chevrons.map(d => <path key={d + 'o'} d={d} stroke="#0c0c0c" strokeWidth="9" />)}
      {chevrons.map(d => <path key={d} d={d} stroke="#e6e8e6" strokeWidth="5.5" />)}
    </g>
    <circle cx="865" cy="36" r="13" fill="#e6e8e6" stroke="#0c0c0c" strokeWidth="2" />
    <circle cx="1208" cy="36" r="13" fill="#e6e8e6" stroke="#0c0c0c" strokeWidth="2" />
    <path d="M1026 8 L1055 38 L1026 66Z" fill="#e6e8e6" stroke="#0c0c0c" strokeWidth="4" strokeLinejoin="round" />
  </PlaybackBar>
);

const SmallTri = () => <Triangle $w={6} $h={9} $c="#3c3c3c" />;

const NavTools = () => (
  <NavBar>
    <GraySvg w={30} h={32}>
      <path d="M15 0 L23 10 H18 V31 H12 V10 H7Z" fill="#eef0f4" stroke="#444" />
      <ellipse cx="15" cy="19" rx="14" ry="6" fill="none" stroke="#444" strokeWidth="1.5" />
    </GraySvg>
    <NavItem $ml={10}><SmallTri /></NavItem>
    <NavItem $ml={14}>
      <GraySvg w={28} h={28}>
        <rect x="1" y="9" width="26" height="18" fill="#e8e8ec" stroke="#555" />
        <rect x="5" y="14" width="18" height="10" fill="#8f98a8" stroke="#333" />
        <path d="M2 9 L7 1 V9 Z M10 8 L24 3 V8Z" fill="#888" />
      </GraySvg>
    </NavItem>
    <NavItem $ml={23}>
      <GraySvg w={31} h={31}>
        <path d="M9 30 L2 15 L8 18 L7 3 L11 3 L13 13 L14 0 L18 0 L19 13 L22 2 L25 3 L23 15 L29 8 L30 11 L22 24 V30Z" fill="#fafafa" stroke="#555" strokeWidth="1.2" />
      </GraySvg>
    </NavItem>
    <NavItem $ml={20}>
      <GraySvg w={32} h={30}>
        <circle cx="12" cy="12" r="11" fill="#dcecec" stroke="#555" strokeWidth="1.5" />
        <path d="M20 20 L30 29" stroke="#333" strokeWidth="4" />
        <path d="M26 5 H32 M29 2 V8 M26 11 H32" stroke="#444" />
      </GraySvg>
    </NavItem>
    <NavItem $ml={21}>
      <GraySvg w={31} h={30}>
        <rect x="0.5" y="0.5" width="29" height="29" fill="none" stroke="#666" strokeDasharray="3 2" />
        <circle cx="12" cy="12" r="11" fill="#e4eeee" stroke="#555" strokeWidth="1.5" />
        <path d="M20 20 L30 29" stroke="#333" strokeWidth="4" />
      </GraySvg>
    </NavItem>
    <NavItem $ml={10}><SmallTri /></NavItem>
    <NavItem $ml={14}>
      <GraySvg w={30} h={30}>
        <rect x="0.5" y="0.5" width="29" height="23" fill="#dfe3e8" stroke="#555" />
        <rect x="4" y="4" width="22" height="16" fill="#8db0de" />
        <path d="M12 24 H18 L20 27 H24 V30 H6 V27 H10Z" fill="#bbb" />
      </GraySvg>
    </NavItem>
    <NavItem $ml={5}><SmallTri /></NavItem>
    <NavItem $ml={14}>
      <svg width="29" height="29" viewBox="0 0 29 29">
        <defs>
          <pattern id="gridp" width="5" height="5" patternUnits="userSpaceOnUse"><rect width="5" height="5" fill="#fff" /><path d="M0 0 H5 M0 0 V5" stroke="#777" /></pattern>
          <linearGradient id="gridg" x1="0" y1="0" x2="0" y2="1"><stop offset="0" stopColor="#fff" stopOpacity="0" /><stop offset="1" stopColor="#555" stopOpacity=".6" /></linearGradient>
        </defs>
        <rect width="29" height="29" fill="url(#gridp)" /><rect width="29" height="29" fill="url(#gridg)" />
      </svg>
    </NavItem>
    <NavItem $ml={6}><SmallTri /></NavItem>
    <NavItem $ml={15}>
      <GraySvg w={30} h={30}>
        <path d="M1 10 L9 1 H29 V20 L21 29" fill="#fff" stroke="#333" />
        <rect x="1" y="10" width="21" height="19" fill="#8db0de" stroke="#333" />
        <circle cx="8" cy="21" r="5" fill="#bbb" stroke="#444" /><circle cx="15" cy="16" r="3" fill="#bbb" stroke="#444" />
      </GraySvg>
    </NavItem>
    <NavItem $ml={5}><SmallTri /></NavItem>
  </NavBar>
);

const Field = ({ label, checked, select, children }: { label: string; checked?: boolean; select?: string; children?: React.ReactNode }) => (
  <FieldRow>
    <FieldLabel>{label}</FieldLabel>
    {select && (
      <SelectBox>
        {select}
        <Triangle $w={6} $h={6} $c="#3c3c3c" />
      </SelectBox>
    )}
    {checked !== undefined && <Check $on={checked} $ml={10}>{checked && <CheckMark />}</Check>}
    {children}
  </FieldRow>
);

const Head = ({ title, hasCheck = true }: { title: string; hasCheck?: boolean }) => (
  <SectionHead>
    <Triangle $w={9} $h={9} $c="#3c3c3c" />
    {hasCheck && <Check $on $ml={15}><CheckMark /></Check>}
    <HeadTitle>{title}</HeadTitle>
  </SectionHead>
);

const SimulateDialog = () => (
  <SimPanel>
    <SimHeader>
      <Grip />
      <SimBadge><MinusBadge /></SimBadge>
      <SimTitle>SIMULATE</SimTitle>
      <GraySvg w={20} h={10}>
        <path d="M0 0 L10 5 L0 10Z M10 0 L20 5 L10 10Z" fill="#333" />
      </GraySvg>
    </SimHeader>
    <SimTabs>
      <SimTab $w={154} $active><Eye fill="#888" /><SimTabText>Display</SimTabText></SimTab>
      <SimTab $w={116}>
        <svg width="28" height="28" viewBox="0 0 28 28">
          <circle cx="14" cy="14" r="14" fill="#808080" />
          <rect x="12" y="12" width="4" height="10" fill="#fff" /><rect x="12" y="6" width="4" height="4" fill="#fff" />
        </svg>
        <SimTabText>Info</SimTabText>
      </SimTab>
      <SimTab $w={170}>
        <GraySvg w={30} h={32}>
          <path d="M0 17 L10 9 L18 14 L30 1" fill="none" stroke="#888" strokeWidth="2" />
          <path d="M0 24 H6 V32 H0Z M8 18 H15 V32 H8Z M17 20 H23 V32 H17Z M24 14 H30 V32 H24Z" fill="#777" />
        </GraySvg>
        <SimTabText>Statistics</SimTabText>
      </SimTab>
    </SimTabs>
    <SimContent>
      <ScrollTrack><ScrollThumb /></ScrollTrack>
      <Section $open>
        <Head title="Tool" />
        <Field label="Tool" select="Holder / Head" />
        <Field label="Transparent" checked={false} />
        <Field label="Programmec..." checked={false} />
      </Section>
      <Section $open>
        <Head title="Toolpath" />
        <Field label="Show links" checked />
        <Field label="Show leads" checked />
        <Field label="Show cuttinc..." checked />
        <Field label="Show points" checked={false} />
        <Field label="Mode" select="Toolpath before p..." />
      </Section>
      <Section $open>
        <Head title="Stock" />
        <Field label="Colorization" select="Operation" />
        <Field label="Material" select="Plastic Vinyl" />
        <Field label="Accuracy">
          <Slider>
            <SliderThumb width="26" height="28" viewBox="0 0 26 28">
              <defs>
                <linearGradient id="thumbg" x1="0" y1="0" x2="0" y2="1"><stop offset="0" stopColor="#eee" /><stop offset="1" stopColor="#777" /></linearGradient>
              </defs>
              <path d="M13 1 L25 13 V24 Q25 27 22 27 H4 Q1 27 1 24 V13Z" fill="url(#thumbg)" stroke="#555" strokeWidth="1.5" />
            </SliderThumb>
          </Slider>
        </Field>
        <Field label="Transparent" checked={false} />
        <Field label="Stop on colli..." checked={false} />
      </Section>
      <Section>
        <Head title="View" hasCheck={false} />
      </Section>
    </SimContent>
    <SimFooter><CloseButton>Close</CloseButton></SimFooter>
  </SimPanel>
);

const Group = ({ label, w, gap, children, last, shift }: { label: string; w: number; gap: number; children: React.ReactNode; last?: boolean; shift?: number }) => (
  <ToolGroup $w={w} $last={last} $shift={shift}>
    <ToolIcons $gap={gap}>{children}</ToolIcons>
    <GroupLabel>{label}<Triangle $w={5.5} $h={9} $c="#3c3c3c" /></GroupLabel>
  </ToolGroup>
);

const bandPath = 'M1020 222 L2081 664 Q2105 676 2091 694 L1145 1794';

export default function App() {
  return (
    <Screen>
      <GlobalStyle />
      <DataPanel>
        <DataHeader>
          <GraySvg w={32} h={24}>
            <circle cx="5.5" cy="6" r="4" /><circle cx="16" cy="4" r="4.5" /><circle cx="26.5" cy="6" r="4" />
            <path d="M0 24 V14 Q1 11 5 11 Q9 11 9.500 14 V24Z M11 24 V13 Q12 10 16 10 Q20 10 21 13 V24Z M22.500 24 V14 Q23 11 27 11 Q31 11 32 14 V24Z" />
          </GraySvg>
          <HubName>Íris</HubName>
          <GraySvg w={18} h={14}>
            <path d="M2 2 L9 11 L16 2" fill="none" stroke="#666" strokeWidth="3.5" />
          </GraySvg>
          <HeaderActions>
            <svg width="33" height="30" viewBox="0 0 33 30" fill="none" stroke="#666" strokeWidth="4">
              <path d="M3 13 A14 13 0 0 1 28 8" /><path d="M30 17 A14 13 0 0 1 5 22" />
              <path d="M33 2 V12 H22Z M0 28 V18 H11Z" fill="#666" stroke="none" />
            </svg>
            <svg width="32" height="32" viewBox="0 0 32 32" fill="none" stroke="#666">
              <ellipse cx="13" cy="13" rx="12" ry="12" strokeWidth="2" /><path d="M21 22 L31 32" strokeWidth="4" />
            </svg>
            <svg width="26" height="26" viewBox="0 0 26 26" stroke="#666" strokeWidth="2"><path d="M1 1 L25 25 M25 1 L1 25" /></svg>
          </HeaderActions>
        </DataHeader>
        <SettingsRow>
          <svg width="32" height="32" viewBox="0 0 32 32">
            <g fill="#666">
              {[0, 45, 90, 135].map(a => <rect key={a} x="12" y="0" width="8" height="32" rx="2" transform={`rotate(${a} 16 16)`} />)}
              <circle cx="16" cy="16" r="12" />
            </g>
            <circle cx="16" cy="16" r="6" fill="#e6e6e6" /><circle cx="16" cy="16" r="3.500" fill="#666" />
          </svg>
        </SettingsRow>
        <Breadcrumb>
          <GraySvg w={30} h={27}>
            <path d="M15 0 L30 15 H26 V27 H18 V17 H12 V27 H4 V15 H0Z" />
          </GraySvg>
          <svg width="19" height="27" viewBox="0 0 19 27"><path d="M2 0 L17 13.500 L2 27 L7 13.500Z" fill="#ccc" /></svg>
          <span>My Recent Data</span>
        </Breadcrumb>
        <CardList>
          {recentFiles.map(f => (
            <Card key={f.name}>
              <Thumb><Thumbnail kind={f.thumb} /></Thumb>
              <CardBody>
                <CardTitle><BoxIcon />{f.name}</CardTitle>
                <CardTime>{f.time}</CardTime>
              </CardBody>
              <VersionBox>{f.version}<Triangle $w={6.5} $h={11} /></VersionBox>
            </Card>
          ))}
        </CardList>
      </DataPanel>
      <Main>
        <TabBar>
          <QuickTools>
            <GraySvg w={28} h={28}>
              {[0, 10, 20].flatMap(x => [0, 10, 20].map(y => <rect key={`${x}-${y}`} x={x} y={y} width="8.500" height="8.500" rx="1" />))}
            </GraySvg>
            <QuickSlot $ml={39}><GraySvg w={26} h={32}><path d="M2 0 H17 L26 11 V30 Q26 32 24 32 H2 Q0 32 0 30 V2 Q0 0 2 0Z" /></GraySvg></QuickSlot>
            <QuickSlot $ml={11}><Triangle $w={7.5} $h={10} /></QuickSlot>
            <QuickSlot $ml={37}>
              <GraySvg w={29} h={28}>
                <path d="M0 0 H29 V24 L25 28 H4 L0 24Z" />
                <rect x="8" y="2" width="13" height="9" fill="#ccc" /><rect x="9" y="18" width="11" height="10" fill="#ccc" /><rect x="12" y="20" width="5" height="8" fill="#666" />
              </GraySvg>
            </QuickSlot>
            <QuickSlot $ml={38}>
              <svg width="27" height="30" viewBox="0 0 27 30" fill="none" stroke="#666" strokeWidth="4"><path d="M5 13 H14 Q24 13 24 30" /><path d="M12 0 L1 13 L12 26" /></svg>
            </QuickSlot>
            <QuickSlot $ml={13}><Triangle $w={6.5} $h={10} /></QuickSlot>
            <QuickSlot $ml={24}>
              <svg width="28" height="30" viewBox="0 0 28 30" fill="none" stroke="#9a9a9a" strokeWidth="4"><path d="M23 13 H14 Q4 13 4 30" /><path d="M16 0 L27 13 L16 26" /></svg>
            </QuickSlot>
            <QuickSlot $ml={12}><Triangle $w={7.5} $h={10} $c="#9a9a9a" /></QuickSlot>
          </QuickTools>
          <DocTab $w={419} $pl={91}>
            <BoxIcon dim />Samsetning v4
            <TabClose><svg width="20" height="20" viewBox="0 0 20 20" stroke="#888" strokeWidth="2.5"><path d="M1 1 L19 19 M19 1 L1 19" /></svg></TabClose>
          </DocTab>
          <DocTab $w={418} $pl={40} $active>
            <BoxIcon />Assembly_file_copy v1*
            <TabClose><svg width="20" height="20" viewBox="0 0 20 20" stroke="#777" strokeWidth="2.5"><path d="M1 1 L19 19 M19 1 L1 19" /></svg></TabClose>
          </DocTab>
          <DocTab $w={418} $pl={83}>
            <BoxIcon dim />Hringur_Litill v2
            <TabClose><svg width="20" height="20" viewBox="0 0 20 20" stroke="#888" strokeWidth="2.5"><path d="M1 1 L19 19 M19 1 L1 19" /></svg></TabClose>
          </DocTab>
          <PlusTab><GraySvg w={26} h={26}><path d="M10 0 H16 V10 H26 V16 H16 V26 H10 V16 H0 V10 H10Z" fill="#8a8a8a" /></GraySvg></PlusTab>
          <StatusIcons>
            <svg width="32" height="32" viewBox="0 0 32 32">
              <circle cx="16" cy="16" r="14" fill="#ccc" stroke="#666" strokeWidth="4" strokeDasharray="70 8" />
              <path d="M8 14 L11 7 L14 10 L16 5 L19 9 L23 6 L25 18 L19 27 L12 23 L7 18Z" fill="#666" />
            </svg>
            <svg width="32" height="32" viewBox="0 0 32 32">
              <circle cx="16" cy="16" r="15" fill="#ccc" stroke="#666" strokeWidth="2" /><circle cx="16" cy="16" r="11" fill="#666" />
              <path d="M16 8 V17 H24" fill="none" stroke="#ccc" strokeWidth="2.500" />
            </svg>
            <svg width="30" height="32" viewBox="0 0 30 32">
              <path d="M13 2 Q20 2 21 11 L22 20 L27 25 H0 L5 20 L6 11 Q7 3 13 2Z" fill="#666" /><path d="M9 27 H18 L13.500 32Z" fill="#666" />
              <circle cx="23" cy="7" r="6" fill={BLUE} />
            </svg>
            <svg width="33" height="32" viewBox="0 0 33 32">
              <circle cx="16.500" cy="16" r="16" fill="#666" />
              <text x="16.500" y="24" textAnchor="middle" fontFamily={ARIAL} fontWeight="700" fontSize="23" fill="#ccc">?</text>
            </svg>
            <Avatar>ÍB</Avatar>
          </StatusIcons>
        </TabBar>
        <Ribbon>
          <WorkspaceButton>MANUFACTURE<Triangle $w={6} $h={10} $c="#333" /></WorkspaceButton>
          <RibbonBody>
            <RibbonTabs>
              <RibbonTab $w={132}>MILLING</RibbonTab>
              <RibbonTab $w={142}>TURNING</RibbonTab>
              <RibbonTab $w={152}>ADDITIVE</RibbonTab>
              <RibbonTab $w={172}>INSPECTION</RibbonTab>
              <RibbonTab $w={202} $active>FABRICATION</RibbonTab>
              <RibbonTab $w={144}>UTILITIES</RibbonTab>
            </RibbonTabs>
            <RibbonGroups>
              <Group label="NEST" w={122} gap={0}><NestIcon /></Group>
              <Group label="SETUP" w={195} gap={26}><FolderIcon /><GDocIcon /></Group>
              <Group label="CUTTING" w={168} gap={0}><CuttingIcon /></Group>
              <Group label="ACTIONS" w={280} gap={20} shift={6}>
                <ActiveTool><EndmillActive /></ActiveTool>
                <G1G2Icon />
                <SheetIcon />
              </Group>
              <Group label="MANAGE" w={624} gap={24}>
                <TapeIcon /><CheckerIcon /><TextPlusIcon /><ToolsIcon /><MachineIcon /><FilesIcon kind="G" /><FilesIcon kind="S" />
              </Group>
              <Group label="INSPECT" w={158} gap={0}><RulerIcon /></Group>
              <Group label="SELECT" w={154} gap={0} last><SelectBoxIcon /></Group>
            </RibbonGroups>
          </RibbonBody>
        </Ribbon>
        <Viewport>
          <SceneSvg width="2077" height="1548" viewBox="803 228 2077 1548">
            <path d="M1277 1776 L2217 681 L2372 746" fill="none" stroke="#2e5a52" strokeWidth="3" />
            <path d={bandPath} fill="none" stroke="#6f9aa0" strokeWidth="40" />
            <path d={bandPath} fill="none" stroke="#dedede" strokeWidth="36" />
            <path d={bandPath} fill="none" stroke="#3448e0" strokeWidth="2.5" />
          </SceneSvg>
          <ViewCube><CubeFace>TOP</CubeFace></ViewCube>
          <AxisLabel $x={1884} $y={58} $c="#16268c">Z</AxisLabel>
          <AxisTick />
          <AxisLabel $x={2013} $y={70} $c="#0a8a10">Y</AxisLabel>
          <AxisLabel $x={1899} $y={182} $c="#8a2010">X</AxisLabel>
          <TreeScroll />
          <BrowserTree />
          <FloatBar $top={8}>
            <RewindSlot>
              <svg width="20" height="14" viewBox="0 0 20 14"><path d="M10 0 L0 7 L10 14Z M20 0 L10 7 L20 14Z" fill="#222" /></svg>
            </RewindSlot>
            <FloatTitle $ml={20} $tight>BROWSER</FloatTitle>
            <FloatEnd><MinusBadge /><Grip /></FloatEnd>
          </FloatBar>
          <FloatBar $top={1490}>
            <FloatTitle $ml={49}>COMMENTS</FloatTitle>
            <FloatEnd><MinusBadge plus /><Grip /></FloatEnd>
          </FloatBar>
          <SliderGlow />
          <SliderBump />
          <NavTools />
          <Playback />
          <SimulateDialog />
        </Viewport>
        <Ground><GroundMark /></Ground>
      </Main>
    </Screen>
  );
}
